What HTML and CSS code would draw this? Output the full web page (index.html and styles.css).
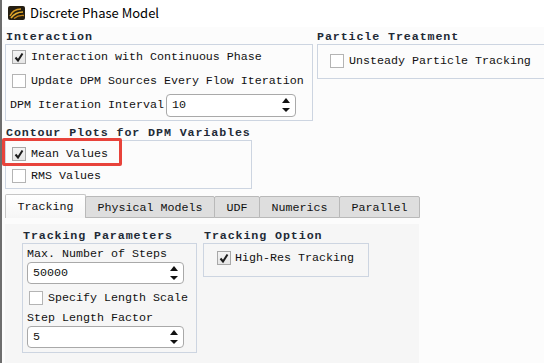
FILE: index.html
```html
<!DOCTYPE html>
<html lang="en">

<head>
    <meta charset="UTF-8">
    <title>Discrete Phase Model</title>
    <link rel="stylesheet" href="styles.css">
</head>

<body>
    <div class="window">
        <div class="titlebar">
            <svg class="app-icon" width="17" height="14" viewBox="0 0 17 14">
                <rect width="17" height="14" rx="2" fill="#241e12" />
                <path d="M2 10 C4 5, 8 3, 13 3" stroke="#d89a22" stroke-width="1.6" fill="none" />
                <path d="M3 12 C6 8, 10 6, 15 6" stroke="#e8b030" stroke-width="1.6" fill="none" />
                <path d="M6 12.5 C9 10, 12 9, 16 9.5" stroke="#c8861a" stroke-width="1.4" fill="none" />
            </svg>
            <span class="title">Discrete Phase Model</span>
        </div>

        <div class="main">
            <div class="top-row">
                <div class="group group-interaction">
                    <div class="group-title">Interaction</div>
                    <div class="group-box">
                        <div class="check-row"><span class="check checked"><svg viewBox="0 0 12 12"><path d="M2.5 6.5l2.5 3 4.5-7" /></svg></span>Interaction with Continuous Phase</div>
                        <div class="check-row"><span class="check"></span>Update DPM Sources Every Flow Iteration</div>
                        <div class="field-row">
                            <span>DPM Iteration Interval</span>
                            <div class="spin spin-interval">10<span class="arrows"><i class="up"></i><i class="down"></i></span></div>
                        </div>
                    </div>
                </div>
                <div class="group group-particle">
                    <div class="group-title">Particle Treatment</div>
                    <div class="group-box">
                        <div class="check-row"><span class="check"></span>Unsteady Particle Tracking</div>
                    </div>
                </div>
            </div>

            <div class="group group-contour">
                <div class="group-title">Contour Plots for DPM Variables</div>
                <div class="group-box">
                    <div class="check-row"><span class="check checked"><svg viewBox="0 0 12 12"><path d="M2.5 6.5l2.5 3 4.5-7" /></svg></span>Mean Values</div>
                    <div class="check-row"><span class="check"></span>RMS Values</div>
                    <span class="highlight"></span>
                </div>
            </div>

            <div class="tabs">
                <div class="tab active tab-tracking">Tracking</div>
                <div class="tab tab-physical">Physical Models</div>
                <div class="tab tab-udf">UDF</div>
                <div class="tab tab-numerics">Numerics</div>
                <div class="tab tab-parallel">Parallel</div>
            </div>

            <div class="tab-panel">
                <div class="panel-inner">
                    <div class="group group-params">
                        <div class="group-title">Tracking Parameters</div>
                        <div class="group-box">
                            <div class="field-label">Max. Number of Steps</div>
                            <div class="spin">50000<span class="arrows"><i class="up"></i><i class="down"></i></span></div>
                            <div class="check-row"><span class="check"></span>Specify Length Scale</div>
                            <div class="field-label">Step Length Factor</div>
                            <div class="spin">5<span class="arrows"><i class="up"></i><i class="down"></i></span></div>
                        </div>
                    </div>
                    <div class="group group-option">
                        <div class="group-title">Tracking Option</div>
                        <div class="group-box">
                            <div class="check-row"><span class="check checked"><svg viewBox="0 0 12 12"><path d="M2.5 6.5l2.5 3 4.5-7" /></svg></span>High-Res Tracking</div>
                        </div>
                    </div>
                </div>
            </div>
        </div>
    </div>
</body>

</html>
```

FILE: styles.css
```css
* {
    box-sizing: border-box;
}

body {
    margin: 0;
    background: #fcfcfc;
    font-family: "Liberation Mono", "DejaVu Sans Mono", monospace;
    font-size: 11.67px;
    color: #111;
    overflow: hidden;
}

.window {
    height: 363px;
    border-left: 2px solid #6e6e6e;
}

/* 标题栏 */
.titlebar {
    height: 27px;
    background: #fff;
    display: flex;
    align-items: center;
    gap: 5px;
    padding-left: 6px;
    padding-bottom: 2px;
}

.app-icon {
    display: block;
}

.title {
    font-family: "Noto Sans CJK SC", "Noto Sans", sans-serif;
    font-size: 13px;
    color: #000;
}

.main {
    padding: 3px 0 0 3px;
}

.top-row {
    display: flex;
    gap: 4px;
    margin-right: -6px;
}

/* 分组 */
.group-title {
    height: 14px;
    line-height: 14px;
    font-weight: bold;
    letter-spacing: 0.9px;
    padding-left: 1px;
    color: #222a36;
    white-space: nowrap;
}

.group-box {
    border: 1px solid #cdd5e1;
    position: relative;
}

.check-row {
    display: flex;
    align-items: center;
    gap: 5px;
    white-space: nowrap;
}

.check {
    width: 14px;
    height: 14px;
    border: 1px solid #b4b4b4;
    background: #fff;
    display: flex;
    align-items: center;
    justify-content: center;
    flex: none;
}

.check.checked {
    background: linear-gradient(#f4f4f4, #e6e6e6);
    border-color: #a8a8a8;
}

.check svg {
    width: 12px;
    height: 12px;
}

.check path {
    fill: none;
    stroke: #1d1d1d;
    stroke-width: 2;
}

.field-row {
    display: flex;
    align-items: center;
    gap: 2px;
    white-space: nowrap;
}

.field-label {
    height: 14px;
    line-height: 14px;
    white-space: nowrap;
}

.spin {
    height: 22px;
    border: 1px solid #a9a9a9;
    border-radius: 4px;
    background: #fff;
    display: flex;
    align-items: center;
    justify-content: space-between;
    padding: 0 5px 0 5px;
}

.arrows {
    display: flex;
    flex-direction: column;
    gap: 5px;
}

.arrows i {
    display: block;
    width: 0;
    height: 0;
    border-left: 4px solid transparent;
    border-right: 4px solid transparent;
}

.arrows .up {
    border-bottom: 5px solid #111;
}

.arrows .down {
    border-top: 4px solid #111;
}

/* Interaction */
.group-interaction {
    width: 308px;
    flex: none;
}

.group-interaction .group-box {
    padding: 0 4px 3px;
}

.group-interaction .check-row,
.group-interaction .field-row {
    height: 24px;
}

.group-interaction .check-row {
    padding-left: 2px;
}

.spin-interval {
    width: 130px;
    height: 23px;
}

/* Particle Treatment */
.group-particle {
    flex: 1;
}

.group-particle .group-title {
    padding-left: 0;
}

.group-particle .group-box {
    padding: 4px 12px 5px;
}

.group-particle .check-row {
    height: 24px;
}

/* Contour */
.group-contour {
    width: 247px;
    margin-top: 5px;
}

.group-contour .group-box {
    padding: 2px 0 1px 6px;
}

.group-contour .check-row {
    height: 22px;
}

.highlight {
    position: absolute;
    left: -4px;
    top: -3px;
    width: 120px;
    height: 28px;
    border: 3px solid #e8433b;
    border-radius: 2px;
}

/* 选项卡 */
.tabs {
    display: flex;
    align-items: flex-end;
    height: 24px;
    margin-top: 5px;
}

.tab {
    height: 22px;
    line-height: 22px;
    text-align: center;
    border: 1px solid #b9b9b9;
    border-radius: 2px 2px 0 0;
    background: #dedede;
    margin-left: -1px;
    white-space: nowrap;
}

.tab.active {
    height: 24px;
    line-height: 24px;
    margin-left: 0;
    border-color: #c6c6c6;
    border-bottom: none;
    background: linear-gradient(#ffffff, #f6f6f6);
}

.tab-tracking {
    width: 81px;
}

.tab-physical {
    width: 130px;
}

.tab-udf {
    width: 46px;
}

.tab-numerics {
    width: 81px;
}

.tab-parallel {
    width: 81px;
}

.tab-panel {
    width: 414px;
    padding-top: 6px;
}

.panel-inner {
    height: 140px;
    background: #f6f6f6;
    display: flex;
    align-items: flex-start;
    gap: 6px;
    padding: 5px 0 0 17px;
}

/* Tracking Parameters */
.group-params {
    width: 175px;
}

.group-params .group-box {
    padding: 3px 12px 4px 4px;
}

.group-params .spin {
    margin-top: 1px;
}

.group-params .check-row {
    height: 26px;
    margin-top: 1px;
    padding-left: 2px;
}

/* Tracking Option */
.group-option {
    width: 166px;
}

.group-option .group-box {
    padding: 3px 8px 7px 13px;
}

.group-option .check-row {
    height: 22px;
    gap: 4px;
}
```
